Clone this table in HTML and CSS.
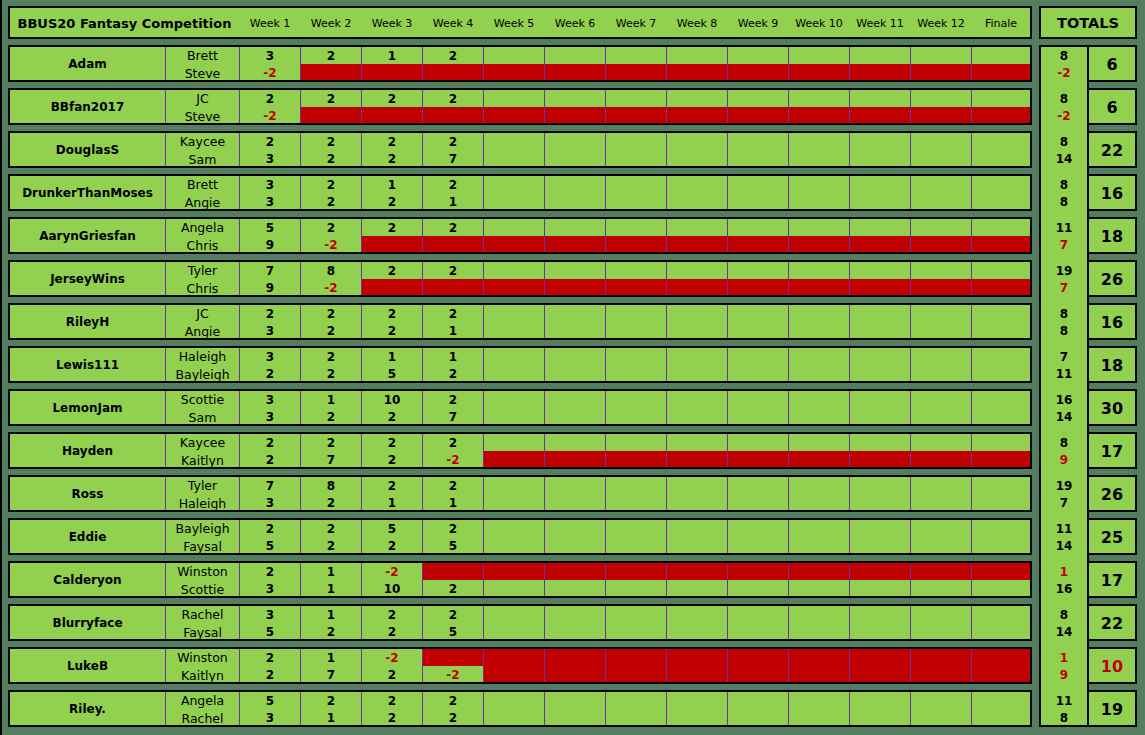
FILE: index.html
```html
<!DOCTYPE html>
<html>
<head>
<meta charset="utf-8">
<link rel="stylesheet" href="styles.css">
</head>
<body>
<div class="page">
  <div class="main">
    <div class="head">
      <span class="title">BBUS20 Fantasy Competition</span>
      <span class="wk">Week 1</span><span class="wk">Week 2</span><span class="wk">Week 3</span><span class="wk">Week 4</span><span class="wk">Week 5</span><span class="wk">Week 6</span><span class="wk">Week 7</span><span class="wk">Week 8</span><span class="wk">Week 9</span><span class="wk">Week 10</span><span class="wk">Week 11</span><span class="wk">Week 12</span><span class="wk">Finale</span>
    </div>

    <div class="row">
      <span class="nm">Adam</span>
      <span class="pl">Brett</span><b>3</b><b>2</b><b>1</b><b>2</b><i></i><i></i><i></i><i></i><i></i><i></i><i></i><i></i><i></i>
      <span class="pl">Steve</span><b class="n">-2</b><i class="r"></i><i class="r"></i><i class="r"></i><i class="r"></i><i class="r"></i><i class="r"></i><i class="r"></i><i class="r"></i><i class="r"></i><i class="r"></i><i class="r"></i><i class="r"></i>
    </div>

    <div class="row">
      <span class="nm">BBfan2017</span>
      <span class="pl">JC</span><b>2</b><b>2</b><b>2</b><b>2</b><i></i><i></i><i></i><i></i><i></i><i></i><i></i><i></i><i></i>
      <span class="pl">Steve</span><b class="n">-2</b><i class="r"></i><i class="r"></i><i class="r"></i><i class="r"></i><i class="r"></i><i class="r"></i><i class="r"></i><i class="r"></i><i class="r"></i><i class="r"></i><i class="r"></i><i class="r"></i>
    </div>

    <div class="row">
      <span class="nm">DouglasS</span>
      <span class="pl">Kaycee</span><b>2</b><b>2</b><b>2</b><b>2</b><i></i><i></i><i></i><i></i><i></i><i></i><i></i><i></i><i></i>
      <span class="pl">Sam</span><b>3</b><b>2</b><b>2</b><b>7</b><i></i><i></i><i></i><i></i><i></i><i></i><i></i><i></i><i></i>
    </div>

    <div class="row">
      <span class="nm">DrunkerThanMoses</span>
      <span class="pl">Brett</span><b>3</b><b>2</b><b>1</b><b>2</b><i></i><i></i><i></i><i></i><i></i><i></i><i></i><i></i><i></i>
      <span class="pl">Angie</span><b>3</b><b>2</b><b>2</b><b>1</b><i></i><i></i><i></i><i></i><i></i><i></i><i></i><i></i><i></i>
    </div>

    <div class="row">
      <span class="nm">AarynGriesfan</span>
      <span class="pl">Angela</span><b>5</b><b>2</b><b>2</b><b>2</b><i></i><i></i><i></i><i></i><i></i><i></i><i></i><i></i><i></i>
      <span class="pl">Chris</span><b>9</b><b class="n">-2</b><i class="r"></i><i class="r"></i><i class="r"></i><i class="r"></i><i class="r"></i><i class="r"></i><i class="r"></i><i class="r"></i><i class="r"></i><i class="r"></i><i class="r"></i>
    </div>

    <div class="row">
      <span class="nm">JerseyWins</span>
      <span class="pl">Tyler</span><b>7</b><b>8</b><b>2</b><b>2</b><i></i><i></i><i></i><i></i><i></i><i></i><i></i><i></i><i></i>
      <span class="pl">Chris</span><b>9</b><b class="n">-2</b><i class="r"></i><i class="r"></i><i class="r"></i><i class="r"></i><i class="r"></i><i class="r"></i><i class="r"></i><i class="r"></i><i class="r"></i><i class="r"></i><i class="r"></i>
    </div>

    <div class="row">
      <span class="nm">RileyH</span>
      <span class="pl">JC</span><b>2</b><b>2</b><b>2</b><b>2</b><i></i><i></i><i></i><i></i><i></i><i></i><i></i><i></i><i></i>
      <span class="pl">Angie</span><b>3</b><b>2</b><b>2</b><b>1</b><i></i><i></i><i></i><i></i><i></i><i></i><i></i><i></i><i></i>
    </div>

    <div class="row">
      <span class="nm">Lewis111</span>
      <span class="pl">Haleigh</span><b>3</b><b>2</b><b>1</b><b>1</b><i></i><i></i><i></i><i></i><i></i><i></i><i></i><i></i><i></i>
      <span class="pl">Bayleigh</span><b>2</b><b>2</b><b>5</b><b>2</b><i></i><i></i><i></i><i></i><i></i><i></i><i></i><i></i><i></i>
    </div>

    <div class="row">
      <span class="nm">LemonJam</span>
      <span class="pl">Scottie</span><b>3</b><b>1</b><b>10</b><b>2</b><i></i><i></i><i></i><i></i><i></i><i></i><i></i><i></i><i></i>
      <span class="pl">Sam</span><b>3</b><b>2</b><b>2</b><b>7</b><i></i><i></i><i></i><i></i><i></i><i></i><i></i><i></i><i></i>
    </div>

    <div class="row">
      <span class="nm">Hayden</span>
      <span class="pl">Kaycee</span><b>2</b><b>2</b><b>2</b><b>2</b><i></i><i></i><i></i><i></i><i></i><i></i><i></i><i></i><i></i>
      <span class="pl">Kaitlyn</span><b>2</b><b>7</b><b>2</b><b class="n">-2</b><i class="r"></i><i class="r"></i><i class="r"></i><i class="r"></i><i class="r"></i><i class="r"></i><i class="r"></i><i class="r"></i><i class="r"></i>
    </div>

    <div class="row">
      <span class="nm">Ross</span>
      <span class="pl">Tyler</span><b>7</b><b>8</b><b>2</b><b>2</b><i></i><i></i><i></i><i></i><i></i><i></i><i></i><i></i><i></i>
      <span class="pl">Haleigh</span><b>3</b><b>2</b><b>1</b><b>1</b><i></i><i></i><i></i><i></i><i></i><i></i><i></i><i></i><i></i>
    </div>

    <div class="row">
      <span class="nm">Eddie</span>
      <span class="pl">Bayleigh</span><b>2</b><b>2</b><b>5</b><b>2</b><i></i><i></i><i></i><i></i><i></i><i></i><i></i><i></i><i></i>
      <span class="pl">Faysal</span><b>5</b><b>2</b><b>2</b><b>5</b><i></i><i></i><i></i><i></i><i></i><i></i><i></i><i></i><i></i>
    </div>

    <div class="row">
      <span class="nm">Calderyon</span>
      <span class="pl">Winston</span><b>2</b><b>1</b><b class="n">-2</b><i class="r"></i><i class="r"></i><i class="r"></i><i class="r"></i><i class="r"></i><i class="r"></i><i class="r"></i><i class="r"></i><i class="r"></i><i class="r"></i>
      <span class="pl">Scottie</span><b>3</b><b>1</b><b>10</b><b>2</b><i></i><i></i><i></i><i></i><i></i><i></i><i></i><i></i><i></i>
    </div>

    <div class="row">
      <span class="nm">Blurryface</span>
      <span class="pl">Rachel</span><b>3</b><b>1</b><b>2</b><b>2</b><i></i><i></i><i></i><i></i><i></i><i></i><i></i><i></i><i></i>
      <span class="pl">Faysal</span><b>5</b><b>2</b><b>2</b><b>5</b><i></i><i></i><i></i><i></i><i></i><i></i><i></i><i></i><i></i>
    </div>

    <div class="row">
      <span class="nm">LukeB</span>
      <span class="pl">Winston</span><b>2</b><b>1</b><b class="n">-2</b><i class="r"></i><i class="r"></i><i class="r"></i><i class="r"></i><i class="r"></i><i class="r"></i><i class="r"></i><i class="r"></i><i class="r"></i><i class="r"></i>
      <span class="pl">Kaitlyn</span><b>2</b><b>7</b><b>2</b><b class="n">-2</b><i class="r"></i><i class="r"></i><i class="r"></i><i class="r"></i><i class="r"></i><i class="r"></i><i class="r"></i><i class="r"></i><i class="r"></i>
    </div>

    <div class="row">
      <span class="nm">Riley.</span>
      <span class="pl">Angela</span><b>5</b><b>2</b><b>2</b><b>2</b><i></i><i></i><i></i><i></i><i></i><i></i><i></i><i></i><i></i>
      <span class="pl">Rachel</span><b>3</b><b>1</b><b>2</b><b>2</b><i></i><i></i><i></i><i></i><i></i><i></i><i></i><i></i><i></i>
    </div>
  </div>

  <div class="side">
    <div class="thead">TOTALS</div>
    <div class="tbody">
      <div class="tcol">
        <div class="pair"><b>8</b><b class="n">-2</b></div>
        <div class="pair"><b>8</b><b class="n">-2</b></div>
        <div class="pair"><b>8</b><b>14</b></div>
        <div class="pair"><b>8</b><b>8</b></div>
        <div class="pair"><b>11</b><b class="n">7</b></div>
        <div class="pair"><b>19</b><b class="n">7</b></div>
        <div class="pair"><b>8</b><b>8</b></div>
        <div class="pair"><b>7</b><b>11</b></div>
        <div class="pair"><b>16</b><b>14</b></div>
        <div class="pair"><b>8</b><b class="n">9</b></div>
        <div class="pair"><b>19</b><b>7</b></div>
        <div class="pair"><b>11</b><b>14</b></div>
        <div class="pair"><b class="n">1</b><b>16</b></div>
        <div class="pair"><b>8</b><b>14</b></div>
        <div class="pair"><b class="n">1</b><b class="n">9</b></div>
        <div class="pair"><b>11</b><b>8</b></div>
      </div>
      <div class="scores">
        <div class="sc">6</div>
        <div class="sc">6</div>
        <div class="sc">22</div>
        <div class="sc">16</div>
        <div class="sc">18</div>
        <div class="sc">26</div>
        <div class="sc">16</div>
        <div class="sc">18</div>
        <div class="sc">30</div>
        <div class="sc">17</div>
        <div class="sc">26</div>
        <div class="sc">25</div>
        <div class="sc">17</div>
        <div class="sc">22</div>
        <div class="sc n">10</div>
        <div class="sc">19</div>
      </div>
    </div>
  </div>
</div>
</body>
</html>
```

FILE: styles.css
```css
* {
  box-sizing: border-box;
}

body {
  margin: 0;
  background: #537f5e;
  font-family: "DejaVu Sans", Verdana, sans-serif;
  color: #000;
}

.page {
  display: flex;
  gap: 7px;
  height: 735px;
  padding: 6px 0 8px 6px;
  border-left: 2px solid #000;
}

.main {
  display: flex;
  flex-direction: column;
  gap: 6px;
  width: 1024px;
}

.head {
  height: 33px;
  padding-top: 2px;
  border: 2px solid #000;
  background: #92d050;
  display: grid;
  grid-template-columns: 155px 73px repeat(12, 60px) 58px;
  column-gap: 1px;
  align-items: center;
}

.title {
  grid-column: span 2;
  text-align: center;
  font-weight: bold;
  font-size: 13px;
}

.wk {
  text-align: center;
  font-size: 11px;
}

.row {
  height: 37px;
  border: 2px solid #000;
  background: #7030a0;
  display: grid;
  grid-template-columns: 155px 73px repeat(12, 60px) 58px;
  grid-template-rows: 17px 16px;
  column-gap: 1px;
}

.row > * {
  background: #92d050;
  display: flex;
  align-items: center;
  justify-content: center;
  font-size: 12px;
  font-weight: bold;
  font-style: normal;
}

.row > :nth-child(n+16) {
  padding-top: 2px;
}

.row > .nm {
  grid-row: span 2;
  padding-top: 1px;
}

.row > .pl {
  font-weight: normal;
  font-size: 12.5px;
}

.row > .r {
  background: #c00000;
}

.n {
  color: #c00000;
}

.side {
  width: 98px;
  display: flex;
  flex-direction: column;
  gap: 6px;
}

.thead {
  height: 33px;
  border: 2px solid #000;
  background: #92d050;
  display: flex;
  align-items: center;
  justify-content: center;
  font-weight: bold;
  font-size: 14.5px;
}

.tbody {
  display: flex;
}

.tcol {
  width: 50px;
  height: 682px;
  border: 2px solid #000;
  background: #92d050;
  display: flex;
  flex-direction: column;
  gap: 10px;
}

.pair {
  height: 33px;
  display: grid;
  grid-template-rows: 17px 16px;
  place-items: center;
  font-size: 12px;
}

.pair > :last-child {
  padding-top: 2px;
}

.scores {
  width: 48px;
  display: flex;
  flex-direction: column;
  gap: 6px;
}

.sc {
  height: 37px;
  padding-top: 1px;
  border: 2px solid #000;
  border-left: 0;
  background: #92d050;
  display: flex;
  align-items: center;
  justify-content: center;
  font-weight: bold;
  font-size: 16px;
}
```
